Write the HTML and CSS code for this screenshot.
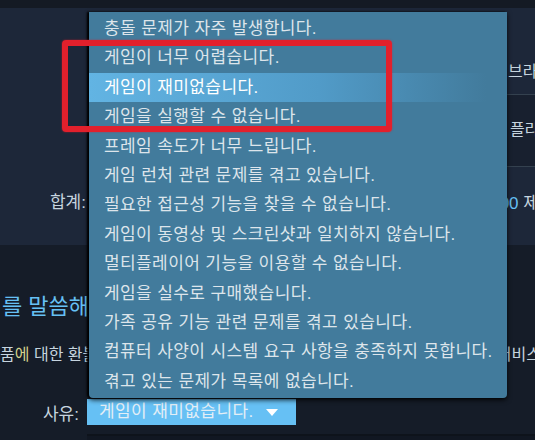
FILE: index.html
```html
<!DOCTYPE html>
<html lang="ko">
<head>
<meta charset="UTF-8">
<title>환불 요청</title>
<link rel="stylesheet" href="styles.css">
</head>
<body>
	<div class="page">
		<div class="topbar"></div>
		<div class="summary">
			<div class="summary-label">합계:</div>
			<div class="summary-mid"></div>
			<div class="summary-side">
				<div class="side-row first">브라우저</div>
				<div class="side-row second">플라이트</div>
				<div class="side-row third"><span class="price">2,000</span> 제외</div>
			</div>
		</div>
		<div class="reason">
			<h2>를 말씀해 주세요</h2>
			<p class="desc"><span>품<span class="mark">에</span> 대한 환불을 요청하시는 이유를</span><span class="desc-end">고객 서비스</span></p>
			<div class="reason-row">
				<label>사유:</label>
				<div class="select">게임이 재미없습니다. <span class="arrow"></span></div>
			</div>
			<div class="notes"></div>
		</div>

		<!-- 펼쳐진 드롭다운 -->
		<ul class="dropdown">
			<li>충돌 문제가 자주 발생합니다.</li>
			<li>게임이 너무 어렵습니다.</li>
			<li class="active">게임이 재미없습니다.</li>
			<li>게임을 실행할 수 없습니다.</li>
			<li>프레임 속도가 너무 느립니다.</li>
			<li>게임 런처 관련 문제를 겪고 있습니다.</li>
			<li>필요한 접근성 기능을 찾을 수 없습니다.</li>
			<li>게임이 동영상 및 스크린샷과 일치하지 않습니다.</li>
			<li>멀티플레이어 기능을 이용할 수 없습니다.</li>
			<li>게임을 실수로 구매했습니다.</li>
			<li>가족 공유 기능 관련 문제를 겪고 있습니다.</li>
			<li>컴퓨터 사양이 시스템 요구 사항을 충족하지 못합니다.</li>
			<li>겪고 있는 문제가 목록에 없습니다.</li>
		</ul>
		<div class="callout"></div>
	</div>
</body>
</html>
```

FILE: styles.css
```css
*{margin:0;padding:0;box-sizing:border-box;list-style:none;}
body{
	background:#151c28;
	font-family:"Liberation Sans","Noto Sans CJK KR",sans-serif;
	color:#c6d4df;
	overflow:hidden;
}
.page{
	position:relative;
	width:535px;
	height:440px;
	overflow:hidden;
}
.topbar{
	height:8px;
	background:#141a24;
}
.summary{
	height:237px;
	display:flex;
	background:#1d2739;
}
.summary-label{
	flex-shrink:0;
	width:86px;
	padding-top:180px;
	text-align:right;
	font-size:17px;
	color:#c6d4df;
}
.summary-mid{
	flex-shrink:0;
	width:380px;
}
.summary-side{
	flex:1;
	min-width:0;
	display:flex;
	flex-direction:column;
	white-space:nowrap;
	font-size:16px;
}
.side-row.first{
	height:87px;
	padding-top:50px;
	padding-left:42px;
	border-bottom:1px solid #34414f;
}
.side-row.second{
	height:72px;
	background:#18202f;
	padding-top:21px;
	padding-left:44px;
	border-bottom:1px solid #34414f;
}
.side-row.third{
	flex:1;
	padding-top:22px;
	padding-left:10px;
	font-size:17px;
}
.price{color:#66c0f4;}

.reason{
	padding-top:47px;
	white-space:nowrap;
}
.reason h2{
	font-weight:normal;
	font-size:22px;
	color:#66c0f4;
	padding-left:2px;
	line-height:30px;
}
.desc{
	margin-top:22px;
	font-size:16px;
	line-height:22px;
	display:flex;
	justify-content:space-between;
	overflow:hidden;
}
.desc-end{
	margin-right:-6px;
}
.mark{color:#d6d38c;}
.reason-row{
	margin-top:33px;
	display:flex;
	align-items:center;
}
.reason-row label{
	width:79px;
	text-align:right;
	font-size:17px;
	margin-right:8px;
}
.select{
	width:209px;
	height:26px;
	background:#66c0f4;
	color:#e3eef6;
	font-size:17px;
	letter-spacing:.4px;
	line-height:26px;
	padding-left:12px;
	display:flex;
	align-items:center;
	gap:12px;
}
.arrow{
	width:0;
	height:0;
	border-left:6px solid transparent;
	border-right:6px solid transparent;
	border-top:7px solid #fff;
}
.notes{
	margin:9px 0 0 87px;
	height:20px;
	border-top:2px solid #0e131b;
	background:#111722;
}

.dropdown{
	position:absolute;
	left:89px;
	top:12px;
	width:418px;
	height:386px;
	padding-top:2px;
	background:#427b9c;
	border-radius:0 0 4px 4px;
	box-shadow:-2px 0 2px #000,0 2px 5px rgba(0,0,0,.8);
}
.dropdown li{
	height:29.4px;
	line-height:29.4px;
	padding-left:15px;
	font-size:17px;
	letter-spacing:.4px;
	color:#dde5eb;
	white-space:nowrap;
}
.dropdown li.active{
	color:#fff;
	background:linear-gradient(to right,#62b4e3 0%,#519bc8 55%,#427b9c 95%);
}
.callout{
	position:absolute;
	left:62px;
	top:40px;
	width:330px;
	height:92px;
	border:6px solid #e2202c;
	border-radius:4px;
	box-shadow:0 0 2px rgba(226,32,44,.7);
}
```
